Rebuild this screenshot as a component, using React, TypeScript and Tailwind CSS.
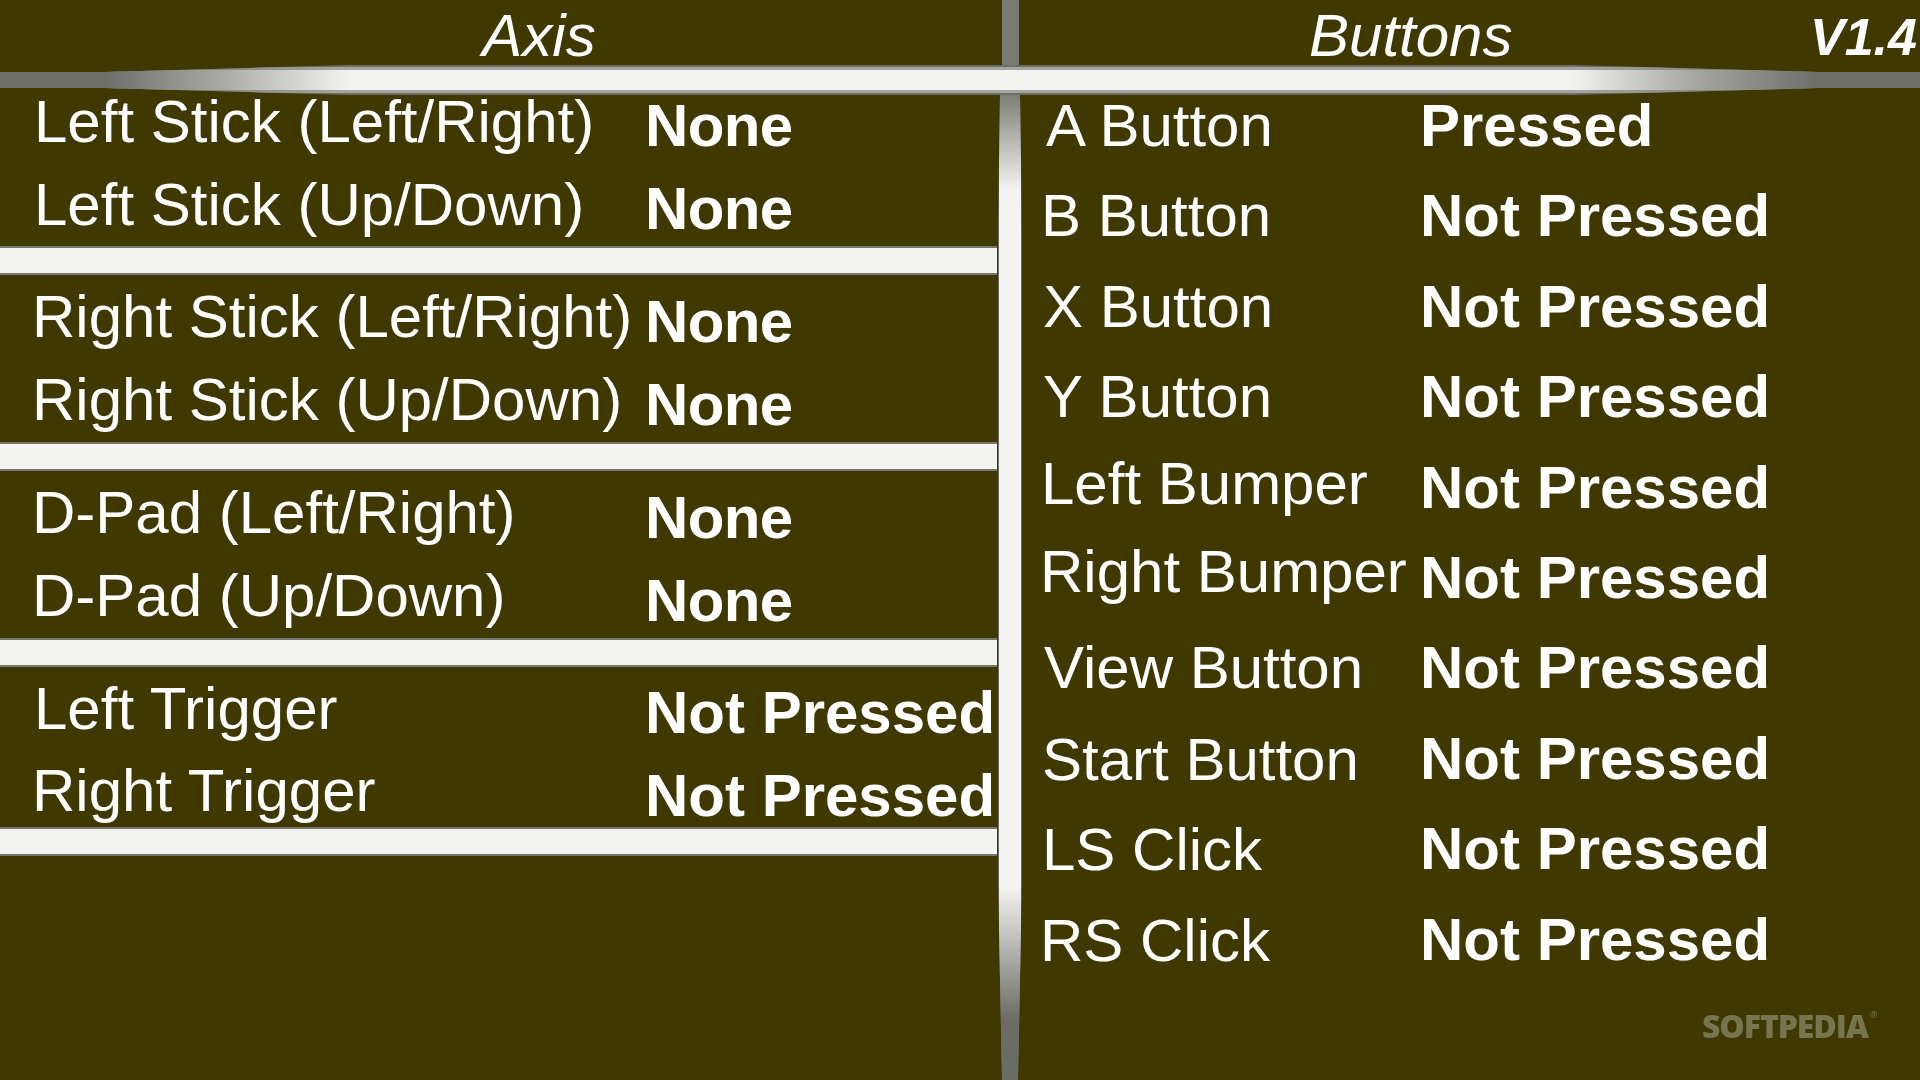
import React from 'react';

const groups = [
  {
    className: 'pt-px pb-[15px]',
    valueShift: 'pt-[8px] tracking-[-0.6px]',
    rows: [
      { label: 'Left Stick (Left/Right)', value: 'None', indent: 'ml-[34px]' },
      { label: 'Left Stick (Up/Down)', value: 'None', indent: 'ml-[34px]' },
    ],
  },
  {
    className: 'pt-[16px] pb-[16px]',
    valueShift: 'pt-[10px] tracking-[-0.6px]',
    rows: [
      { label: 'Right Stick (Left/Right)', value: 'None', indent: 'ml-[32px]' },
      { label: 'Right Stick (Up/Down)', value: 'None', indent: 'ml-[32px]' },
    ],
  },
  {
    className: 'pt-[16px] pb-[16px]',
    valueShift: 'pt-[10px] tracking-[-0.6px]',
    rows: [
      { label: 'D-Pad (Left/Right)', value: 'None', indent: 'ml-[32px]' },
      { label: 'D-Pad (Up/Down)', value: 'None', indent: 'ml-[32px]' },
    ],
  },
  {
    className: 'pt-[16px] pb-[9px]',
    valueShift: 'pt-[8px]',
    rows: [
      { label: 'Left Trigger', value: 'Not Pressed', indent: 'ml-[34px]' },
      { label: 'Right Trigger', value: 'Not Pressed', indent: 'ml-[32px]', labelShift: 'pb-[2px]' },
    ],
  },
];

const buttons = [
  { label: 'A Button', value: 'Pressed', indent: 'ml-[23px]', shift: '' },
  { label: 'B Button', value: 'Not Pressed', indent: 'ml-[18px]', shift: '' },
  { label: 'X Button', value: 'Not Pressed', indent: 'ml-[20px]', shift: '' },
  { label: 'Y Button', value: 'Not Pressed', indent: 'ml-[20px]', shift: '' },
  { label: 'Left Bumper', value: 'Not Pressed', indent: 'ml-[18px]', shift: 'pb-[8px]' },
  { label: 'Right Bumper', value: 'Not Pressed', indent: 'ml-[17px]', shift: 'pb-[12px]' },
  { label: 'View Button', value: 'Not Pressed', indent: 'ml-[21px]', shift: '' },
  { label: 'Start Button', value: 'Not Pressed', indent: 'ml-[19px]', shift: 'pt-[2px]' },
  { label: 'LS Click', value: 'Not Pressed', indent: 'ml-[19px]', shift: 'pt-[2px]' },
  { label: 'RS Click', value: 'Not Pressed', indent: 'ml-[17px]', shift: 'pt-[2px]' },
];

function Band() {
  return <div className="h-[29px] w-[997px] border-y-[2px] border-[#77776f] bg-[#f3f3f1]" />;
}

export default function App() {
  return (
    <div className="relative h-[1080px] w-[1920px] overflow-hidden bg-[#3f3800] font-['Liberation_Sans',Arial,sans-serif] text-[60px] leading-none text-white blur-[0.6px]">
      <div className="flex h-[65px]">
        <div className="w-[1002px] pl-[76px] pt-[6px] text-center italic">Axis</div>
        <div className="w-[17px] bg-[#7a7a74]" />
        <div className="flex flex-1 justify-between pl-[290px] pr-[3px]">
          <span className="pt-[6px] italic">Buttons</span>
          <span className="pt-[11px] text-[52px] font-bold italic">V1.4</span>
        </div>
      </div>

      <div className="h-[30px] bg-[linear-gradient(to_right,#6f6f69_105px,#6e6e68_350px,#6e6e68_1572px,#6f6f69_1817px)] py-[2px] [clip-path:polygon(0_7px,105px_7px,350px_0,1572px_0,1817px_7px,100%_7px,100%_23px,1817px_23px,1572px_30px,350px_30px,105px_23px,0_23px)]">
        <div className="h-[26px] bg-[linear-gradient(to_right,#6f6f69_105px,#a5a5a0_350px,#a5a5a0_1572px,#6f6f69_1817px)] py-[3px]">
          <div className="h-[20px] bg-[linear-gradient(to_right,#6f6f69_0px,#6f6f69_105px,#a9a9a4_220px,#f3f3f1_350px,#f3f3f1_1572px,#a9a9a4_1690px,#6f6f69_1817px)]" />
        </div>
      </div>

      <div className="flex h-[985px]">
        <div className="w-[997px]">
          {groups.map((group) => (
            <React.Fragment key={group.rows[0].label}>
              <div className={`flex flex-col gap-[31px] ${group.className}`}>
                {group.rows.map((row) => (
                  <div key={row.label} className="flex h-[52px] items-center whitespace-nowrap">
                    <div className={`w-[645px] ${row.labelShift ?? ''}`}>
                      <span className={row.indent}>{row.label}</span>
                    </div>
                    <div className={`font-bold ${group.valueShift}`}>{row.value}</div>
                  </div>
                ))}
              </div>
              <Band />
            </React.Fragment>
          ))}
        </div>

        <div className="h-full w-[26px] bg-[#6d6d66] px-[2px] [clip-path:polygon(3px_0,23px_0,25px_135px,25px_785px,21px_100%,5px_100%,1px_785px,1px_135px)]">
          <div className="h-full bg-[linear-gradient(to_bottom,#7e7e78_0px,#f3f3f1_95px,#f3f3f1_792px,#6c6c66_925px)]" />
        </div>

        <div className="flex flex-1 flex-col gap-[38.4px] pt-[5px]">
          {buttons.map((row) => (
            <div key={row.label} className="flex h-[52px] items-center whitespace-nowrap">
              <div className={`w-[397px] ${row.shift}`}>
                <span className={`inline-block ${row.indent}`}>{row.label}</span>
              </div>
              <div className="font-bold">{row.value}</div>
            </div>
          ))}
        </div>
      </div>

      <div className="absolute left-[1702px] top-[1010px] font-['Open_Sans',sans-serif] text-[32px] font-extrabold tracking-[-1.1px] text-[#77754f]">
        SOFTPEDIA<span className="ml-[2px] inline-block align-top text-[9px] font-normal tracking-normal">®</span>
      </div>
    </div>
  );
}
